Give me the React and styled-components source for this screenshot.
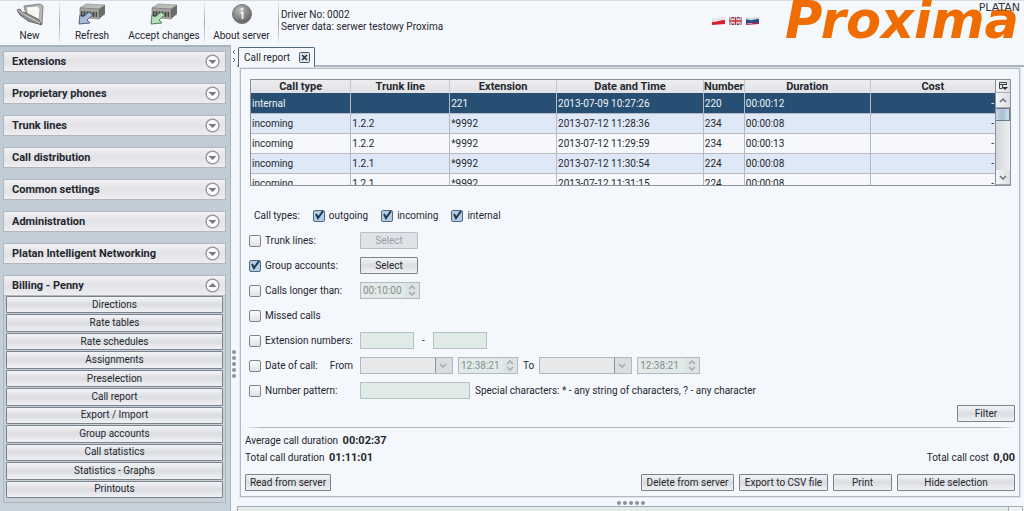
import React, { useState } from "react";
import styled, { createGlobalStyle, css } from "styled-components";

const GlobalStyle = createGlobalStyle`
  * {
    box-sizing: border-box;
  }

  body {
    margin: 0;
    background: #f4f7fc;
    color: #24282e;
    font: 10px/14px Roboto, "DejaVu Sans Condensed", sans-serif;
    overflow: hidden;
  }

  button, input, select {
    margin: 0;
    color: inherit;
    font: inherit;
  }

  b {
    font-size: 11px;
  }
`;

const Page = styled.div`
  display: flex;
  flex-direction: column;
  height: 100vh;
`;

const Toolbar = styled.header`
  display: flex;
  flex: none;
  height: 45px;
  padding-top: 1px;
  border-top: 1px solid #d9dde3;
`;

const Divider = styled.span`
  width: 1px;
  margin: 1px 0 3px;
  background: linear-gradient(#e4e7ec, #a3a8b0 50%, #e4e7ec);
`;

const ToolButton = styled.button`
  display: flex;
  flex-direction: column;
  align-items: center;
  justify-content: space-between;
  width: ${(props) => props.$width}px;
  padding: 1px 0 2px;
  border: 0;
  background: none;
  white-space: nowrap;
`;

const ServerInfo = styled.div`
  flex: 1;
  padding: 7px 2px;
  line-height: 12px;
`;

const Flags = styled.div`
  display: flex;
  gap: 4px;
  padding: 15px 26px 0 0;
`;

const FlagButton = styled.button`
  width: 13px;
  height: 8px;
  padding: 0;
  border: 0;
  background: none;
  line-height: 0;
`;

const Logo = styled.div`
  position: relative;
  height: 42px;
  padding-right: 5px;
  color: #ef6c00;
  font: italic bold 51px/38px "DejaVu Sans", sans-serif;
`;

const LogoBrand = styled.small`
  position: absolute;
  top: 0;
  right: 4px;
  color: #33363b;
  font: 11px/12px "DejaVu Sans", sans-serif;
`;

const Body = styled.div`
  display: flex;
  flex: 1;
  min-height: 0;
`;

const Sidebar = styled.nav`
  display: flex;
  flex-direction: column;
  flex: none;
  gap: 11px;
  width: 231px;
  padding: 4px 4px 0 3px;
  border-top: 2px solid #a9b2bb;
  border-right: 1px solid #aab3bd;
  background: linear-gradient(#bfcad4, #c8d2da);
`;

const GroupHeader = styled.button`
  display: flex;
  align-items: center;
  justify-content: space-between;
  width: 100%;
  height: 21px;
  padding: 0 5px 0 8px;
  border: 1px solid #b0b6be;
  background: linear-gradient(#f2f2f4, #e2e2e7 50%, #eeeef1);
  font-size: 11px;
  font-weight: bold;
`;

const GroupItems = styled.div`
  display: flex;
  flex-direction: column;
  height: 207px;
  padding: 0 2px 3px;
  border: 1px solid #b0b6be;
  border-top: 0;
`;

const bevel = css`
  border: 1px solid #7d828a;
  border-radius: 1px;
  background: linear-gradient(#f3f4f7, #dcdde2 50%, #f0f1f4);
`;

const GroupItem = styled.button`
  ${bevel}
  flex: 1;
  min-height: 0;
  padding: 0;
  margin-bottom: 1px;
  line-height: 14px;
`;

const Splitter = styled.div`
  display: flex;
  flex: none;
  flex-direction: column;
  align-items: center;
  justify-content: space-between;
  width: 6px;
  padding: 4px 0 133px;
`;

const Dots = styled.span`
  display: flex;
  flex-direction: ${(props) => (props.$row ? "row" : "column")};
  justify-content: center;
  gap: 2px;
  padding: ${(props) => (props.$row ? "4px 0 1px" : 0)};

  i {
    width: 4px;
    height: 4px;
    border-radius: 2px;
    background: #8d939b;
  }
`;

const Main = styled.main`
  display: flex;
  flex: 1;
  flex-direction: column;
  min-width: 0;
`;

const Tabs = styled.div`
  display: flex;
  height: 22px;
  padding: 2px 0 0 1px;
  border-bottom: 2px solid #a8b3bf;
`;

const Tab = styled.div`
  display: flex;
  align-items: center;
  gap: 9px;
  height: 20px;
  padding: 0 4px 0 5px;
  border: 1px solid #52677c;
  border-bottom: 0;
  border-radius: 2px 2px 0 0;
  background: #f4f7fc;
`;

const TabClose = styled.button`
  padding: 0;
  border: 0;
  background: none;
  line-height: 0;
`;

const Panel = styled.section`
  margin: 1px 4px 0 3px;
  border: 1px solid #b1bbc6;
  box-shadow: 0 0 0 1px #dfe5ed;
  padding: 10px 4px 5px;
`;

const TableFrame = styled.div`
  display: flex;
  height: 107px;
  margin: 0 4px 0 5px;
  border: 1px solid #8c9198;
`;

const TableScroll = styled.div`
  flex: 1;
  overflow: hidden;
`;

const Table = styled.table`
  width: 100%;
  border-collapse: collapse;
  table-layout: fixed;
  white-space: nowrap;

  th {
    height: 13px;
    padding: 0;
    border-right: 1px solid #c3c6cc;
    background: linear-gradient(#ededf0, #e0e0e5);
    font-size: 11px;
    line-height: 13px;
  }

  td {
    height: 20px;
    padding: 2px 1px 0;
    border-right: 1px solid #b6bbc3;
    border-bottom: 1px solid #b6bbc3;
  }

  td:last-child,
  th:last-child {
    border-right: 0;
  }

  td:last-child {
    text-align: right;
  }
`;

const Row = styled.tr`
  background: ${(props) =>
    props.$selected ? "#264f73" : props.$odd ? "#dfe8f6" : "#f6f8fc"};
  color: ${(props) => (props.$selected ? "#f2f5f9" : "inherit")};
`;

const Scrollbar = styled.div`
  display: flex;
  flex-direction: column;
  width: 15px;
  border-left: 1px solid #8c9198;
  background: linear-gradient(90deg, #d4d6da, #eceef1);
`;

const ScrollButton = styled.button`
  height: ${(props) => props.$height || 15}px;
  padding: 0;
  border: 0;
  border-bottom: 1px solid #a5aab2;
  background: linear-gradient(90deg, #f4f5f7, #dcdee2);
  line-height: 0;
`;

const ScrollThumb = styled.div`
  height: 13px;
  margin-bottom: auto;
  border: 1px solid #647b91;
  border-left: 0;
  background: linear-gradient(90deg, #c6d6e5, #a9bfd3 50%, #d3e0ec);
`;

const Filters = styled.form`
  display: flex;
  flex-direction: column;
  padding: 17px 0 0 4px;
`;

const FilterRow = styled.div`
  display: grid;
  grid-template-columns: ${(props) => (props.$types ? "auto" : "111px")} 1fr;
  align-items: center;
  height: 25px;
  padding-left: ${(props) => (props.$types ? 5 : 0)}px;
`;

const Fields = styled.div`
  display: flex;
  align-items: center;
  gap: ${(props) => props.$gap || 5}px;
`;

const CheckLabel = styled.label`
  display: inline-flex;
  align-items: center;
  gap: 4px;
  white-space: nowrap;
`;

const CheckWrap = styled.span`
  position: relative;
  width: 12px;
  height: 12px;

  svg {
    position: absolute;
    top: -1px;
    left: 1px;
    pointer-events: none;
  }
`;

const CheckInput = styled.input`
  display: block;
  width: 12px;
  height: 12px;
  appearance: none;
  border: 1px solid #7e838b;
  border-radius: 2px;
  background: linear-gradient(#fafbfc, #dfe1e5);

  &:checked {
    border-color: #4c6a87;
    background: #b5cde3;
  }
`;

const DateLabel = styled.div`
  display: flex;
  justify-content: space-between;
  padding-right: 7px;
`;

const Button = styled.button`
  ${bevel}
  width: ${(props) => props.$width}px;
  height: 17px;
  padding: 0;
  line-height: 14px;
  white-space: nowrap;

  &:disabled {
    border-color: #b9bec4;
    background: #dfe2e6;
    color: #9a9fa6;
  }
`;

const TextInput = styled.input`
  width: ${(props) => props.$width}px;
  height: 17px;
  padding: 0 2px;
  border: 1px solid #b8bfc4;
  background: #e0ebe7;
`;

const Spinner = styled.span`
  display: flex;
  width: ${(props) => props.$width}px;
  height: 17px;
  border: 1px solid #b3b9bf;
  background: #e0ebe7;
  color: #858c93;
`;

const SpinnerInput = styled.input`
  flex: 1;
  min-width: 0;
  padding: 0 0 0 2px;
  border: 0;
  background: none;
`;

const SpinnerButtons = styled.span`
  display: flex;
  flex-direction: column;
  justify-content: center;
  width: 14px;
  background: #dde2e5;

  button {
    height: 6px;
    padding: 0;
    border: 0;
    background: none;
    line-height: 0;
  }
`;

const Combo = styled.span`
  position: relative;
  display: flex;
  width: 93px;
  height: 17px;
  border: 1px solid #b3b7bd;
  background: #d9dce1;

  svg {
    position: absolute;
    top: 5px;
    right: 5px;
    pointer-events: none;
  }
`;

const ComboSelect = styled.select`
  width: 100%;
  padding: 0;
  appearance: none;
  border: 0;
  border-radius: 0;
  background: linear-gradient(90deg, #e7e8e9 74px, #8f949b 74px 75px, #d9dce1 75px);
  opacity: 1;
`;

const FilterActions = styled.div`
  display: flex;
  justify-content: flex-end;
  padding-top: 2px;
`;

const Rule = styled.hr`
  height: 1px;
  margin: 5px 0 4px;
  border: 0;
  background: linear-gradient(90deg, transparent, #b2b7be 2%, #b2b7be 98%, transparent);
`;

const Summary = styled.div`
  display: flex;
  align-items: flex-end;
  justify-content: space-between;
  line-height: 17px;

  b {
    margin-left: 2px;
  }
`;

const Actions = styled.div`
  display: flex;
  gap: 5px;
  padding-top: 8px;

  button:first-child {
    margin-right: auto;
  }
`;

const BottomPane = styled.div`
  display: flex;
  flex: 1;
  justify-content: flex-end;
  margin-right: 1px;
  border: 1px solid #a4aab1;
  border-bottom: 0;
  background: #e3ebe8;
`;

const PaneScroll = styled.span`
  width: 14px;
  border-left: 1px solid #a4aab1;
  background: #eff1f4;
`;

const GROUPS = [
  "Extensions",
  "Proprietary phones",
  "Trunk lines",
  "Call distribution",
  "Common settings",
  "Administration",
  "Platan Intelligent Networking",
];

const BILLING = [
  "Directions",
  "Rate tables",
  "Rate schedules",
  "Assignments",
  "Preselection",
  "Call report",
  "Export / Import",
  "Group accounts",
  "Call statistics",
  "Statistics - Graphs",
  "Printouts",
];

const COLUMNS = [
  ["Call type", 100],
  ["Trunk line", 99],
  ["Extension", 107],
  ["Date and Time", 147],
  ["Number", 41],
  ["Duration", 126],
  ["Cost", 125],
];

const CALLS = [
  ["internal", "", "221", "2013-07-09 10:27:26", "220", "00:00:12", "-"],
  ["incoming", "1.2.2", "*9992", "2013-07-12 11:28:36", "234", "00:00:08", "-"],
  ["incoming", "1.2.2", "*9992", "2013-07-12 11:29:59", "234", "00:00:13", "-"],
  ["incoming", "1.2.1", "*9992", "2013-07-12 11:30:54", "224", "00:00:08", "-"],
  ["incoming", "1.2.1", "*9992", "2013-07-12 11:31:15", "224", "00:00:08", "-"],
];

const FolderIcon = () => (
  <svg width="28" height="24" viewBox="0 0 28 24">
    <path d="M8 3L24 1L27 3L26 21L11 15Z" fill="#b9bab7" stroke="#6a6c6d" strokeWidth="0.8" />
    <path d="M10 4L22 3L24 6L23 18L12 13Z" fill="#f3f3f0" stroke="#8b8c8a" strokeWidth="0.6" />
    <path d="M12 6L20 5L21 14" fill="none" stroke="#fff" strokeWidth="1.5" />
    <path d="M1 7L4 6L6 9L10 10L22 16L26 22L12 18L4 12Z" fill="#8e908f" stroke="#505253" strokeWidth="0.8" />
    <path d="M2 7L9 12L24 20" fill="none" stroke="#d9d9d6" />
  </svg>
);

const DeviceIcon = ({ color, edge }) => (
  <svg width="28" height="22" viewBox="0 0 28 22">
    <path d="M2 5L8 1L27 2L21 6Z" fill="#bcbcb9" stroke="#858784" strokeWidth="0.6" />
    <path d="M2 5L21 6V16L2 14Z" fill="#a2a3a0" stroke="#747673" strokeWidth="0.6" />
    <path d="M21 6L27 2V11L21 16Z" fill="#6b6d6b" />
    <path d="M3 8L19 9V14L3 13Z" fill="#3f413f" />
    <path d="M5 8V12M8 8V12M11 8V13M14 8V14M17 9V14" stroke="#b5b6b2" />
    <path
      d="M11 9L15 12L9 17L12 20L1 21L2 12L5 14Z"
      fill={color}
      stroke={edge}
      strokeWidth="0.9"
      strokeLinejoin="round"
    />
  </svg>
);

const InfoIcon = () => (
  <svg width="22" height="22" viewBox="0 0 22 22">
    <defs>
      <radialGradient id="info-ball" cx="40%" cy="30%" r="70%">
        <stop offset="0" stopColor="#bdbdbd" />
        <stop offset="1" stopColor="#626262" />
      </radialGradient>
    </defs>
    <circle cx="11" cy="11" r="9.5" fill="url(#info-ball)" stroke="#777" />
    <circle cx="11" cy="6" r="1.5" fill="#f3f3f3" />
    <path d="M9.5 9.5H11.5V16" fill="none" stroke="#f3f3f3" strokeWidth="1.8" />
  </svg>
);

const PolishFlag = () => (
  <svg width="13" height="8" viewBox="0 0 13 8">
    <path d="M0 1Q4 2 7 1T13 0V5H0Z" fill="#e6e3e5" />
    <path d="M0 5Q4 5 7 4T13 3V7L0 8Z" fill="#d91f33" />
  </svg>
);

const BritishFlag = () => (
  <svg width="13" height="8" viewBox="0 0 13 8">
    <path d="M0 0H13V8H0Z" fill="#39466f" />
    <path d="M0 0L13 8M13 0L0 8" stroke="#eee" strokeWidth="2" />
    <path d="M0 0L13 8M13 0L0 8" stroke="#c43245" strokeWidth="0.7" />
    <path d="M6.5 0V8M0 4H13" stroke="#eee" strokeWidth="3" />
    <path d="M6.5 0V8M0 4H13" stroke="#c92b3b" strokeWidth="1.6" />
  </svg>
);

const RussianFlag = () => (
  <svg width="13" height="8" viewBox="0 0 13 8">
    <path d="M0 0Q4 2 7 1T13 0V4H0Z" fill="#cdd3db" />
    <path d="M0 2Q4 4 7 3T13 2V6L0 6Z" fill="#244d83" />
    <path d="M0 6Q4 7 7 6T13 5V7L0 8Z" fill="#a92b47" />
  </svg>
);

const GroupArrow = ({ up }) => (
  <svg width="15" height="15" viewBox="0 0 15 15">
    <circle cx="7.5" cy="7.5" r="6.4" fill="#fafafb" stroke="#92969c" strokeWidth="1.3" />
    {up ? (
      <path d="M3.5 9L7.5 5L11.5 9Z" fill="#777c83" />
    ) : (
      <path d="M3.5 6L7.5 10L11.5 6Z" fill="#777c83" />
    )}
  </svg>
);

const CloseIcon = () => (
  <svg width="11" height="11" viewBox="0 0 11 11">
    <rect x="0.5" y="0.5" width="10" height="10" rx="1" fill="#dde3ea" stroke="#4b5663" />
    <path d="M3 3L8 8M8 3L3 8" stroke="#2f3740" strokeWidth="1.6" />
  </svg>
);

const ColumnsIcon = () => (
  <svg width="10" height="10" viewBox="0 0 10 10">
    <path d="M1.5 7.5V1.5H8.5V4M1.5 3.5H8.5M4.5 3.5V7.5M1.5 7.5H4" fill="none" stroke="#3c4148" />
    <path d="M4 6H10L7 9Z" fill="#2b2f36" />
  </svg>
);

const Chevron = ({ up, color = "#6b7077" }) => (
  <svg width="8" height="5" viewBox="0 0 8 5">
    <path
      d={up ? "M1 4L4 1L7 4" : "M1 1L4 4L7 1"}
      fill="none"
      stroke={color}
      strokeWidth="1.5"
    />
  </svg>
);

const SplitArrows = () => (
  <svg width="4" height="14" viewBox="0 0 4 14">
    <path d="M3 1L1 3L3 5M1 9L3 11L1 13" fill="none" stroke="#6c727a" />
  </svg>
);

const DotGrip = ({ row }) => (
  <Dots $row={row}>
    <i />
    <i />
    <i />
    <i />
    <i />
  </Dots>
);

const Check = ({ label, initial = false }) => {
  const [checked, setChecked] = useState(initial);
  return (
    <CheckLabel>
      <CheckWrap>
        <CheckInput
          type="checkbox"
          checked={checked}
          onChange={(e) => setChecked(e.target.checked)}
        />
        {checked && (
          <svg width="12" height="11" viewBox="0 0 12 11">
            <path d="M2 5L4 9L9 2" fill="none" stroke="#24384d" strokeWidth="2" />
          </svg>
        )}
      </CheckWrap>
      {label}
    </CheckLabel>
  );
};

const TimeSpinner = ({ label, value, width }) => (
  <Spinner $width={width}>
    <SpinnerInput aria-label={label} defaultValue={value} disabled />
    <SpinnerButtons>
      <button type="button" aria-label={`${label} up`} disabled>
        <Chevron up color="#a5abb1" />
      </button>
      <button type="button" aria-label={`${label} down`} disabled>
        <Chevron color="#a5abb1" />
      </button>
    </SpinnerButtons>
  </Spinner>
);

const DateCombo = ({ id }) => (
  <Combo>
    <ComboSelect id={id} disabled />
    <Chevron color="#a5abb1" />
  </Combo>
);

const Header = () => (
  <Toolbar>
    <ToolButton $width={59}>
      <FolderIcon />
      New
    </ToolButton>
    <Divider />
    <ToolButton $width={64}>
      <DeviceIcon color="#a9bdd8" edge="#46566e" />
      Refresh
    </ToolButton>
    <ToolButton $width={80}>
      <DeviceIcon color="#b5dfb8" edge="#4b7350" />
      Accept changes
    </ToolButton>
    <Divider />
    <ToolButton $width={73}>
      <InfoIcon />
      About server
    </ToolButton>
    <Divider />
    <ServerInfo>
      <div>Driver No: 0002</div>
      <div>Server data: serwer testowy Proxima</div>
    </ServerInfo>
    <Flags>
      <FlagButton aria-label="Polski">
        <PolishFlag />
      </FlagButton>
      <FlagButton aria-label="English">
        <BritishFlag />
      </FlagButton>
      <FlagButton aria-label="Russian">
        <RussianFlag />
      </FlagButton>
    </Flags>
    <Logo>
      Proxima
      <LogoBrand>PLATAN</LogoBrand>
    </Logo>
  </Toolbar>
);

const Menu = () => (
  <Sidebar>
    {GROUPS.map((name) => (
      <GroupHeader key={name}>
        {name}
        <GroupArrow />
      </GroupHeader>
    ))}
    <div>
      <GroupHeader>
        Billing - Penny
        <GroupArrow up />
      </GroupHeader>
      <GroupItems>
        {BILLING.map((name) => (
          <GroupItem key={name}>{name}</GroupItem>
        ))}
      </GroupItems>
    </div>
  </Sidebar>
);

const CallTable = () => (
  <TableFrame>
    <TableScroll>
      <Table>
        <colgroup>
          {COLUMNS.map(([name, width]) => (
            <col key={name} style={{ width: `${(width / 745) * 100}%` }} />
          ))}
        </colgroup>
        <thead>
          <tr>
            {COLUMNS.map(([name]) => (
              <th key={name}>{name}</th>
            ))}
          </tr>
        </thead>
        <tbody>
          {CALLS.map((call, index) => (
            <Row key={call[3]} $selected={index === 0} $odd={index % 2 === 1}>
              {call.map((cell, i) => (
                <td key={COLUMNS[i][0]}>{cell}</td>
              ))}
            </Row>
          ))}
        </tbody>
      </Table>
    </TableScroll>
    <Scrollbar>
      <ScrollButton $height={13} aria-label="Columns">
        <ColumnsIcon />
      </ScrollButton>
      <ScrollButton aria-label="Scroll up">
        <Chevron up />
      </ScrollButton>
      <ScrollThumb />
      <ScrollButton aria-label="Scroll down">
        <Chevron />
      </ScrollButton>
    </Scrollbar>
  </TableFrame>
);

const FilterForm = () => (
  <Filters onSubmit={(e) => e.preventDefault()}>
    <FilterRow $types>
      <Fields $gap={13}>
        <span>Call types:</span>
        <Check label="outgoing" initial />
        <Check label="incoming" initial />
        <Check label="internal" initial />
      </Fields>
    </FilterRow>
    <FilterRow>
      <Check label="Trunk lines:" />
      <Fields>
        <Button type="button" $width={58} disabled>
          Select
        </Button>
      </Fields>
    </FilterRow>
    <FilterRow>
      <Check label="Group accounts:" initial />
      <Fields>
        <Button type="button" $width={58}>
          Select
        </Button>
      </Fields>
    </FilterRow>
    <FilterRow>
      <Check label="Calls longer than:" />
      <Fields>
        <TimeSpinner label="Minimum duration" value="00:10:00" width={60} />
      </Fields>
    </FilterRow>
    <FilterRow>
      <Check label="Missed calls" />
    </FilterRow>
    <FilterRow>
      <Check label="Extension numbers:" />
      <Fields $gap={8}>
        <TextInput $width={54} aria-label="First extension" disabled />
        <span>-</span>
        <TextInput $width={54} aria-label="Last extension" disabled />
      </Fields>
    </FilterRow>
    <FilterRow>
      <DateLabel>
        <Check label="Date of call:" />
        <label htmlFor="date-from">From</label>
      </DateLabel>
      <Fields>
        <DateCombo id="date-from" />
        <TimeSpinner label="Time from" value="12:38:21" width={60} />
        <label htmlFor="date-to">To</label>
        <DateCombo id="date-to" />
        <TimeSpinner label="Time to" value="12:38:21" width={63} />
      </Fields>
    </FilterRow>
    <FilterRow>
      <Check label="Number pattern:" />
      <Fields>
        <TextInput $width={110} aria-label="Number pattern" disabled />
        <span>Special characters: * - any string of characters, ? - any character</span>
      </Fields>
    </FilterRow>
    <FilterActions>
      <Button $width={58}>Filter</Button>
    </FilterActions>
  </Filters>
);

const App = () => (
  <Page>
    <GlobalStyle />
    <Header />
    <Body>
      <Menu />
      <Splitter>
        <SplitArrows />
        <DotGrip />
      </Splitter>
      <Main>
        <Tabs>
          <Tab>
            Call report
            <TabClose aria-label="Close tab">
              <CloseIcon />
            </TabClose>
          </Tab>
        </Tabs>
        <Panel>
          <CallTable />
          <FilterForm />
          <Rule />
          <Summary>
            <div>
              <div>
                Average call duration <b>00:02:37</b>
              </div>
              <div>
                Total call duration <b>01:11:01</b>
              </div>
            </div>
            <div>
              Total call cost <b>0,00</b>
            </div>
          </Summary>
          <Actions>
            <Button $width={86}>Read from server</Button>
            <Button $width={93}>Delete from server</Button>
            <Button $width={89}>Export to CSV file</Button>
            <Button $width={59}>Print</Button>
            <Button $width={118}>Hide selection</Button>
          </Actions>
        </Panel>
        <DotGrip row />
        <BottomPane>
          <PaneScroll />
        </BottomPane>
      </Main>
    </Body>
  </Page>
);

export default App;
